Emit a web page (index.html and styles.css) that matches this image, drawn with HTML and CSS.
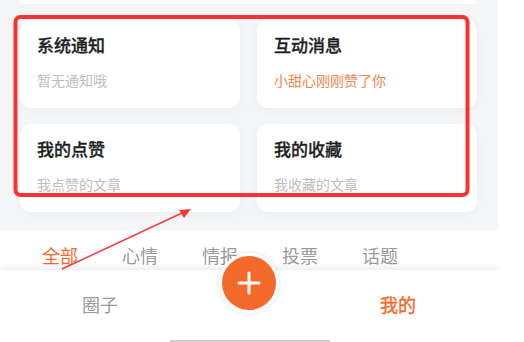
FILE: index.html
```html
<!DOCTYPE html>
<html lang="zh">
<head>
  <meta charset="utf-8" />
  <meta name="viewport" content="width=device-width, initial-scale=1" />
  <title>消息</title>
  <link rel="stylesheet" href="styles.css">
</head>
<body>
  <div class="phone">
    <div class="top-stub"></div>

    <section class="cards">
      <div class="card">
        <h3>系统通知</h3>
        <p>暂无通知哦</p>
      </div>
      <div class="card">
        <h3>互动消息</h3>
        <p class="hot">小甜心刚刚赞了你</p>
      </div>
      <div class="card">
        <h3>我的点赞</h3>
        <p>我点赞的文章</p>
      </div>
      <div class="card">
        <h3>我的收藏</h3>
        <p>我收藏的文章</p>
      </div>
    </section>

    <nav class="tabs">
      <span class="on">全部</span>
      <span>心情</span>
      <span>情报</span>
      <span>投票</span>
      <span>话题</span>
    </nav>

    <footer class="tabbar">
      <div class="tabbar-row">
        <span>圈子</span>
        <span></span>
        <span class="on">我的</span>
      </div>
      <div class="home-bar"></div>
      <button class="add" type="button" aria-label="发布">
        <svg width="24" height="24" viewBox="0 0 24 24"><path d="M12 2v20M2 12h20" stroke="#fff" stroke-width="3" stroke-linecap="round"/></svg>
      </button>
    </footer>

    <!-- annotation drawn over the screenshot -->
    <svg class="mark" width="498" height="342" viewBox="0 0 498 342">
      <rect x="15.5" y="17" width="452" height="178" rx="5" fill="none" stroke="#fb3134" stroke-width="4"/>
      <line x1="62" y1="269" x2="182" y2="213" stroke="#f53a3a" stroke-width="1.5"/>
      <polygon points="191,209 179,210 184,218" fill="#f53a3a"/>
    </svg>
  </div>
</body>
</html>
```

FILE: styles.css
```css
body{margin:0;background:#fff;font-family:"Noto Sans CJK SC","Noto Sans",sans-serif}
.phone{position:relative;width:498px;height:342px;background:#f5f6f8;overflow:hidden;display:flex;flex-direction:column}
.top-stub{height:4px;margin:0 21px 0 20px;background:#fff;border-radius:0 0 10px 10px;box-shadow:0 2px 6px rgba(0,0,0,.03)}
.cards{display:grid;grid-template-columns:1fr 1fr;gap:16px 17px;padding:16px 21px 0 20px}
.card{background:#fff;border-radius:10px;height:88px;padding:13px 17px 0;box-sizing:border-box;box-shadow:0 2px 8px rgba(0,0,0,.04)}
.card h3{margin:0;font-size:17px;line-height:24px;font-weight:500;color:#1e1e1e;-webkit-text-stroke:.3px #1e1e1e}
.card p{margin:13px 0 0;font-size:14px;line-height:20px;color:#bdbdbd}
.card p.hot{color:#f2864c}
.tabs{margin-top:18px;height:40px;box-sizing:border-box;padding:0 0 3px 42px;background:#fff;display:flex;align-items:flex-end;gap:44px}
.tabs span{font-size:18px;line-height:24px;color:#9a9a9a}
.tabs span.on{color:#f26b2b}
.tabbar{position:relative;flex:1;background:#fff;box-shadow:0 -3px 5px rgba(0,0,0,.07);display:flex;flex-direction:column}
.tabbar-row{display:grid;grid-template-columns:200px 98px 200px;padding-top:22px;text-align:center}
.tabbar-row span{font-size:18px;line-height:24px;color:#9a9a9a}
.tabbar-row span.on{color:#f26b2b;-webkit-text-stroke:.4px #f26b2b}
.home-bar{margin:auto 0 0 170px;width:160px;height:2px;background:#cfcfcf}
.add{position:absolute;left:219px;top:-17px;width:60px;height:60px;border-radius:50%;border:3px solid #fff;background:#f46a2b;box-shadow:0 0 5px rgba(0,0,0,.12);display:flex;align-items:center;justify-content:center;padding:0}
.mark{position:absolute;left:0;top:0;pointer-events:none}
```
